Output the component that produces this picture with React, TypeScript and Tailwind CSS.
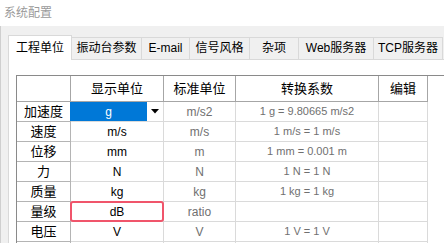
import React from 'react';

const tabs = [
  { label: '工程单位', w: 'w-[64px]', active: true },
  { label: '振动台参数', w: 'w-[70px]' },
  { label: 'E-mail', w: 'w-[48px]' },
  { label: '信号风格', w: 'w-[60px]' },
  { label: '杂项', w: 'w-[49px]' },
  { label: 'Web服务器', w: 'w-[75px]' },
  { label: 'TCP服务器', w: 'w-[69px]' },
];

interface Row {
  name: string;
  unit: string;
  std: string;
  factor: string;
  selected?: boolean;
  invalid?: boolean;
}

const rows: Row[] = [
  { name: '加速度', unit: 'g', std: 'm/s2', factor: '1 g = 9.80665 m/s2', selected: true },
  { name: '速度', unit: 'm/s', std: 'm/s', factor: '1 m/s = 1 m/s' },
  { name: '位移', unit: 'mm', std: 'm', factor: '1 mm = 0.001 m' },
  { name: '力', unit: 'N', std: 'N', factor: '1 N = 1 N' },
  { name: '质量', unit: 'kg', std: 'kg', factor: '1 kg = 1 kg' },
  { name: '量级', unit: 'dB', std: 'ratio', factor: '', invalid: true },
  { name: '电压', unit: 'V', std: 'V', factor: '1 V = 1 V' },
  // next row is scrolled below the window edge, only its lines show
  { name: '', unit: '', std: '', factor: '' },
];

const font = "font-['Liberation_Sans','Noto_Sans_CJK_SC',sans-serif]";

export default function App() {
  return (
    <div className={`w-[444px] h-[243px] overflow-hidden bg-[#f0f0f0] flex flex-col ${font}`}>
      {/* title bar */}
      <div className="h-[26px] shrink-0 bg-white flex items-center pl-[4px] text-[12px] leading-none text-[#9a9a9a]">
        系统配置
      </div>

      <div className="flex-1 flex flex-col border-l border-[#cfcfcf] pl-[7px]">
        {/* tab strip */}
        <div className="h-[33px] shrink-0 flex items-end">
          {tabs.map((t) =>
            t.active ? (
              <div
                key={t.label}
                className={`${t.w} h-[25px] -mb-px relative z-10 bg-white border border-b-0 border-[#d9d9d9] flex items-center justify-center text-[12px] leading-none text-black`}
              >
                {t.label}
              </div>
            ) : (
              <div
                key={t.label}
                className={`${t.w} h-[22px] shrink-0 border-t border-r border-[#d9d9d9] flex items-center justify-center text-[12px] leading-none text-black pb-px`}
              >
                {t.label}
              </div>
            )
          )}
        </div>

        {/* panel */}
        <div className="flex-1 bg-white border-l border-t border-[#d9d9d9] pl-[7px] pt-[15px]">
          <div className="h-full border-l border-t border-[#8a8a8a]">
            {/* header row */}
            <div className="flex h-[26px] text-[13px] leading-none text-black">
              <div className="w-[54px] border-r border-b border-[#a6a6a6]" />
              <div className="w-[93px] border-r border-b border-[#a6a6a6] flex items-center justify-center">显示单位</div>
              <div className="w-[72px] border-r border-b border-[#a6a6a6] flex items-center justify-center">标准单位</div>
              <div className="w-[143px] border-r border-b border-[#a6a6a6] flex items-center justify-center">转换系数</div>
              <div className="w-[49px] border-r border-b border-[#a6a6a6] flex items-center justify-center">编辑</div>
            </div>

            {rows.map((r, i) => (
              <div key={i} className="flex h-[20px] leading-none">
                <div className="w-[54px] border-r border-b border-[#b4b4b4] flex items-center justify-center text-[13px] text-black">
                  {r.name}
                </div>
                <div className="w-[93px] relative border-r border-b border-[#dadada] flex items-center justify-center text-[12px] text-black">
                  {r.selected ? (
                    <div className="absolute -left-px top-0 right-0 bottom-0 flex">
                      <div className="w-[77px] bg-[#0078d7] text-white flex items-center justify-center">{r.unit}</div>
                      <div className="w-[15px] bg-white flex items-center justify-center">
                        <svg width="8" height="5" viewBox="0 0 8 5">
                          <polygon points="0,0 8,0 4,4.5" fill="#000" />
                        </svg>
                      </div>
                    </div>
                  ) : (
                    r.unit
                  )}
                  {r.invalid && (
                    <div className="absolute -left-px -top-px w-[94px] h-[21px] border-2 border-[#f0556b] rounded-[3px]" />
                  )}
                </div>
                <div className="w-[72px] border-r border-b border-[#dadada] flex items-center justify-center text-[12px] text-[#707070]">
                  {r.std}
                </div>
                <div className="w-[143px] border-r border-b border-[#dadada] flex items-center justify-center text-[11px] text-[#707070]">
                  {r.factor}
                </div>
                <div className="w-[49px] border-r border-b border-[#dadada]" />
              </div>
            ))}
          </div>
        </div>
      </div>
    </div>
  );
}
